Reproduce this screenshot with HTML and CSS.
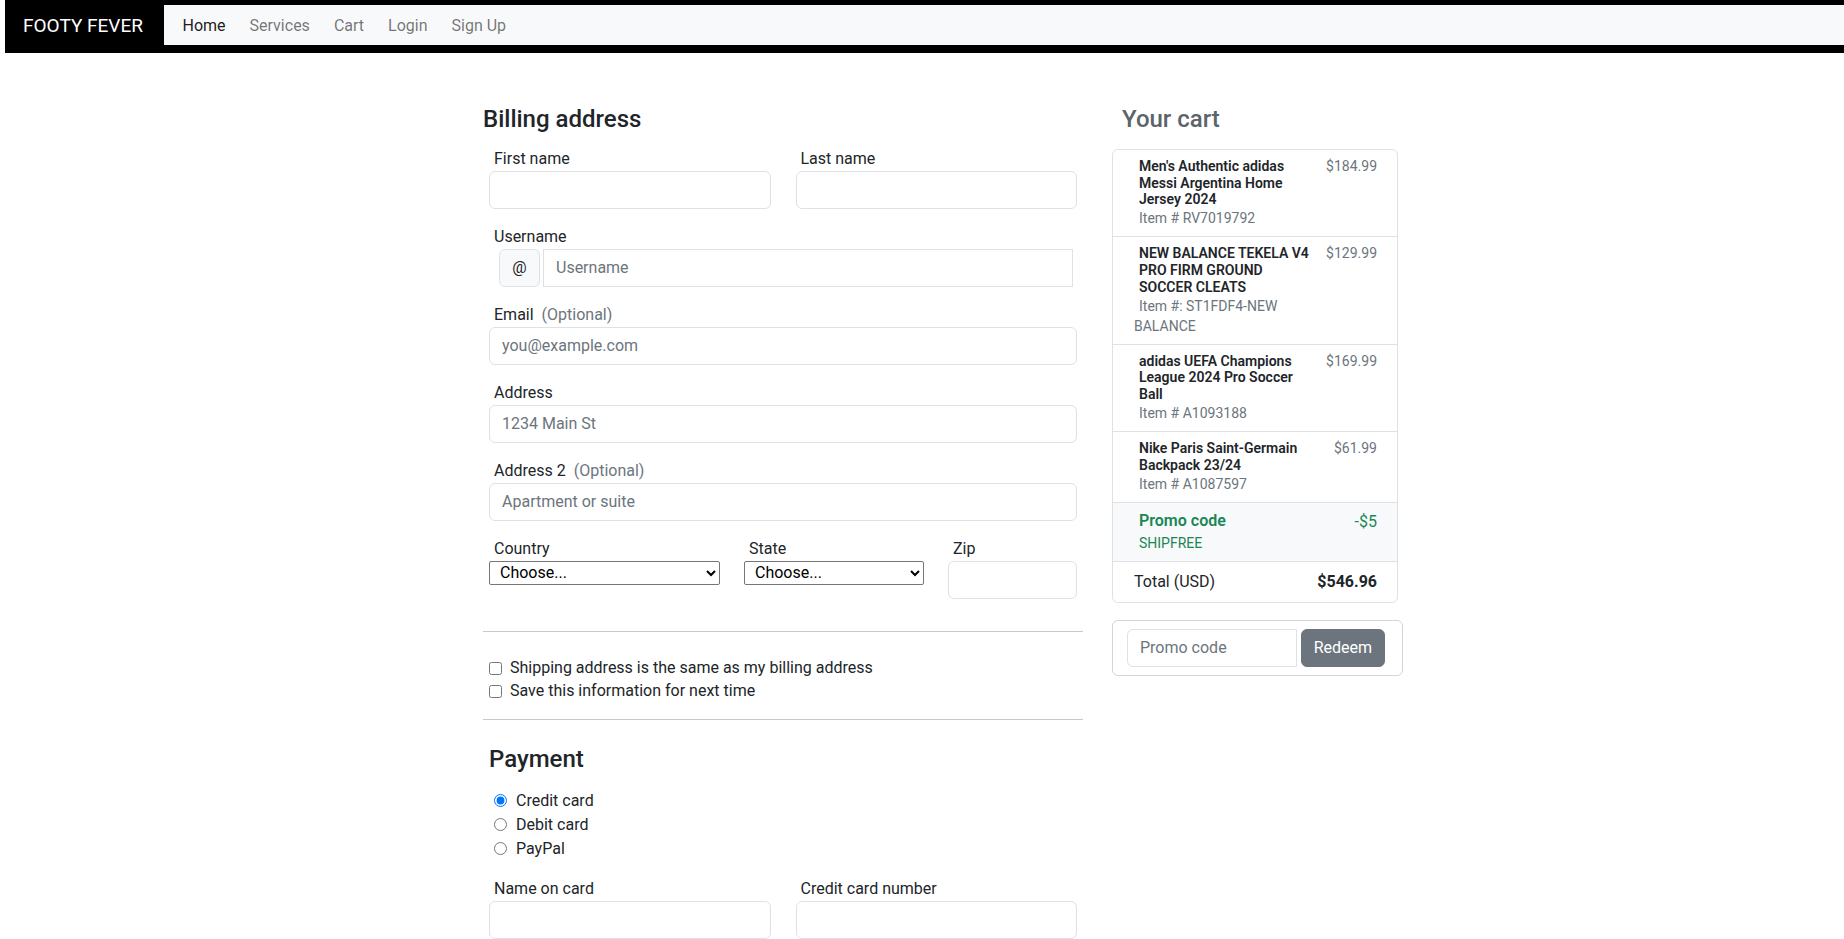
FILE: index.html
```html
<!DOCTYPE html>
<html lang="en">
<head>
<meta charset="utf-8">
<title>Checkout - Footy Fever</title>
<link rel="stylesheet" href="styles.css">
</head>
<body>
<header class="topbar">
  <a class="brand" href="#">FOOTY FEVER</a>
  <nav class="menu">
    <a class="menu-link active" href="#">Home</a>
    <a class="menu-link" href="#">Services</a>
    <a class="menu-link" href="#">Cart</a>
    <a class="menu-link" href="#">Login</a>
    <a class="menu-link" href="#">Sign Up</a>
  </nav>
</header>

<main class="checkout">
  <section class="billing">
    <h4 class="section-title">Billing address</h4>
    <form class="form">
      <div class="fields">
        <div class="pair">
          <div class="field">
            <label class="field-label">First name</label>
            <input class="control" type="text">
          </div>
          <div class="field">
            <label class="field-label">Last name</label>
            <input class="control" type="text">
          </div>
        </div>

        <div class="field">
          <label class="field-label">Username</label>
          <div class="group">
            <span class="addon">@</span>
            <input class="control group-control" type="text" placeholder="Username">
          </div>
        </div>

        <div class="field">
          <label class="field-label">Email <span class="optional">(Optional)</span></label>
          <input class="control" type="email" placeholder="you@example.com">
        </div>

        <div class="field">
          <label class="field-label">Address</label>
          <input class="control" type="text" placeholder="1234 Main St">
        </div>

        <div class="field">
          <label class="field-label">Address 2 <span class="optional">(Optional)</span></label>
          <input class="control" type="text" placeholder="Apartment or suite">
        </div>

        <div class="triple">
          <div class="field">
            <label class="field-label">Country</label>
            <select class="select"><option>Choose...</option><option>United States</option></select>
          </div>
          <div class="field">
            <label class="field-label">State</label>
            <select class="select"><option>Choose...</option><option>California</option></select>
          </div>
          <div class="field">
            <label class="field-label">Zip</label>
            <input class="control" type="text">
          </div>
        </div>
      </div>

      <hr class="divider">

      <div class="checks">
        <label class="check"><input type="checkbox">Shipping address is the same as my billing address</label>
        <label class="check"><input type="checkbox">Save this information for next time</label>
      </div>

      <hr class="divider divider-second">

      <div class="payment">
        <h4 class="section-title payment-title">Payment</h4>
        <label class="radio"><input type="radio" name="pay" checked>Credit card</label>
        <label class="radio"><input type="radio" name="pay">Debit card</label>
        <label class="radio"><input type="radio" name="pay">PayPal</label>

        <div class="pair card-row">
          <div class="field last">
            <label class="field-label">Name on card</label>
            <input class="control" type="text">
          </div>
          <div class="field last">
            <label class="field-label">Credit card number</label>
            <input class="control" type="text">
          </div>
        </div>
      </div>
    </form>
  </section>

  <aside class="cart">
    <h4 class="section-title cart-title">Your cart</h4>
    <ul class="cart-list">
      <li class="cart-item">
        <div class="item-info">
          <h6 class="item-name">Men's Authentic adidas Messi Argentina Home Jersey 2024</h6>
          <small class="item-code">Item # RV7019792</small>
        </div>
        <span class="price">$184.99</span>
      </li>
      <li class="cart-item">
        <div class="item-info">
          <h6 class="item-name">NEW BALANCE TEKELA V4 PRO FIRM GROUND SOCCER CLEATS</h6>
          <small class="item-code">Item #: ST1FDF4-NEW BALANCE</small>
        </div>
        <span class="price">$129.99</span>
      </li>
      <li class="cart-item">
        <div class="item-info">
          <h6 class="item-name">adidas UEFA Champions League 2024 Pro Soccer Ball</h6>
          <small class="item-code">Item # A1093188</small>
        </div>
        <span class="price">$169.99</span>
      </li>
      <li class="cart-item">
        <div class="item-info">
          <h6 class="item-name">Nike Paris Saint-Germain Backpack 23/24</h6>
          <small class="item-code">Item # A1087597</small>
        </div>
        <span class="price">$61.99</span>
      </li>
      <li class="cart-item promo">
        <div class="item-info">
          <h6 class="promo-name">Promo code</h6>
          <small class="promo-code">SHIPFREE</small>
        </div>
        <span class="discount">-$5</span>
      </li>
      <li class="cart-item total">
        <span>Total (USD)</span>
        <strong>$546.96</strong>
      </li>
    </ul>

    <form class="redeem">
      <input class="control redeem-input" type="text" placeholder="Promo code">
      <button class="btn" type="button">Redeem</button>
    </form>
  </aside>
</main>
</body>
</html>
```

FILE: styles.css
```css
* {
  box-sizing: border-box;
}

html, body {
  margin: 0;
  background: #fff;
}

body {
  font-family: Roboto, "Liberation Sans", Arial, sans-serif;
  font-size: 16px;
  line-height: 1.5;
  color: #212529;
}

/* ---------- top bar ---------- */
.topbar {
  display: flex;
  margin-left: 5px;
  padding: 5px 0 7px;
  background: #000;
}

.brand {
  flex: none;
  width: 159px;
  padding: 1px 0 0 18px;
  color: #fff;
  font-size: 19px;
  line-height: 40px;
  text-decoration: none;
  white-space: nowrap;
}

.menu {
  flex: 1;
  display: flex;
  align-items: center;
  height: 40px;
  padding: 2px 0 0 6px;
  background: #f8f9fa;
}

.menu-link {
  padding: 0 12px;
  color: rgba(0, 0, 0, 0.55);
  text-decoration: none;
}

.menu-link:first-child {
  padding-left: 12.5px;
}

.menu-link.active {
  color: rgba(0, 0, 0, 0.9);
}

/* ---------- layout ---------- */
.checkout {
  display: flex;
  align-items: flex-start;
  padding: 52px 0 0 483px;
}

.billing {
  flex: none;
  width: 600px;
}

.cart {
  flex: none;
  width: 291px;
  margin-left: 29px;
}

.section-title {
  margin: 0 0 13px;
  font-size: 24px;
  font-weight: 500;
  line-height: 1.2;
}

/* ---------- form ---------- */
.form {
  margin: 0;
}

.fields,
.checks,
.payment {
  padding: 0 6px;
}

.pair {
  display: grid;
  grid-template-columns: 1fr 1fr;
  column-gap: 25px;
}

.triple {
  display: grid;
  grid-template-columns: 231px 180px 1fr;
  column-gap: 24px;
}

.field {
  margin-bottom: 16px;
}

.field.last {
  margin-bottom: 0;
}

.field-label {
  display: block;
  padding-left: 5px;
  line-height: 24px;
}

.optional {
  margin-left: 4px;
  color: #6c757d;
}

.control {
  display: block;
  width: 100%;
  height: 38px;
  padding: 6px 12px;
  font: inherit;
  color: #212529;
  background: #fff;
  border: 1px solid #dee2e6;
  border-radius: 6px;
  outline: none;
}

.control::placeholder {
  color: #6c757d;
  opacity: 1;
}

.group {
  display: flex;
  gap: 3px;
  margin: 0 4px 0 10px;
}

.addon {
  flex: none;
  display: flex;
  align-items: center;
  justify-content: center;
  width: 41px;
  height: 38px;
  background: #f8f9fa;
  border: 1px solid #dee2e6;
  border-radius: 6px;
}

.group-control {
  flex: 1;
  border-radius: 0;
}

.select {
  display: block;
  width: 100%;
  height: 24px;
  padding: 0 4px 0 6px;
  font-family: inherit;
  font-size: 16px;
  color: #000;
  background: #fff;
  border: 1px solid #767676;
  border-radius: 2px;
}

.divider {
  height: 0;
  margin: 16px 0 25px;
  border: 0;
  border-top: 1px solid rgba(33, 37, 41, 0.25);
}

.divider-second {
  margin: 16px 0 25px;
}

.check {
  display: flex;
  align-items: center;
  height: 23px;
}

.check input {
  width: 13px;
  height: 13px;
  margin: 0 8px 0 0;
}

.payment-title {
  margin-bottom: 15px;
}

.radio {
  display: flex;
  align-items: center;
  height: 24px;
}

.radio input {
  width: 13px;
  height: 13px;
  margin: 0 9px 0 5px;
}

.card-row {
  margin-top: 16px;
}

/* ---------- cart ---------- */
.cart-title {
  margin-bottom: 15px;
  padding-left: 10px;
  color: #5c636a;
}

.cart-list {
  width: 286px;
  margin: 0;
  padding: 0;
  list-style: none;
  border: 1px solid #dee2e6;
  border-radius: 6px;
  overflow: hidden;
}

.cart-item {
  display: flex;
  justify-content: space-between;
  padding: 8px 20px 8px 21px;
  border-bottom: 1px solid #dee2e6;
}

.cart-item:last-child {
  border-bottom: 0;
}

.item-info {
  width: 181px;
}

.item-name {
  margin: 0;
  padding-left: 5px;
  font-size: 14px;
  font-weight: 600;
  line-height: 1.2;
}

.item-code {
  display: block;
  text-indent: 5px;
  font-size: 14px;
  line-height: 20px;
  color: #6c757d;
}

.price {
  font-size: 14px;
  line-height: 16.8px;
  color: #6c757d;
}

.promo {
  background: #f8f9fa;
}

.promo-name {
  margin: 0;
  padding-left: 5px;
  font-size: 16px;
  font-weight: 600;
  line-height: 1.2;
  color: #198754;
}

.promo-code {
  display: block;
  margin-top: 3px;
  text-indent: 5px;
  font-size: 14px;
  line-height: 20px;
  color: #198754;
}

.discount {
  margin-top: 1px;
  line-height: 19.2px;
  color: #198754;
}

.total strong {
  font-weight: 700;
}

.redeem {
  display: flex;
  gap: 4px;
  margin: 17px 0 0;
  padding: 8px 17px 8px 14px;
  border: 1px solid #d3d4d5;
  border-radius: 6px;
}

.redeem-input {
  flex: 1;
  width: auto;
  min-width: 0;
  border-radius: 6px 0 0 6px;
}

.btn {
  flex: none;
  height: 38px;
  padding: 6px 12px;
  font: inherit;
  color: #fff;
  background: #6c757d;
  border: 1px solid #6c757d;
  border-radius: 6px;
}
```
